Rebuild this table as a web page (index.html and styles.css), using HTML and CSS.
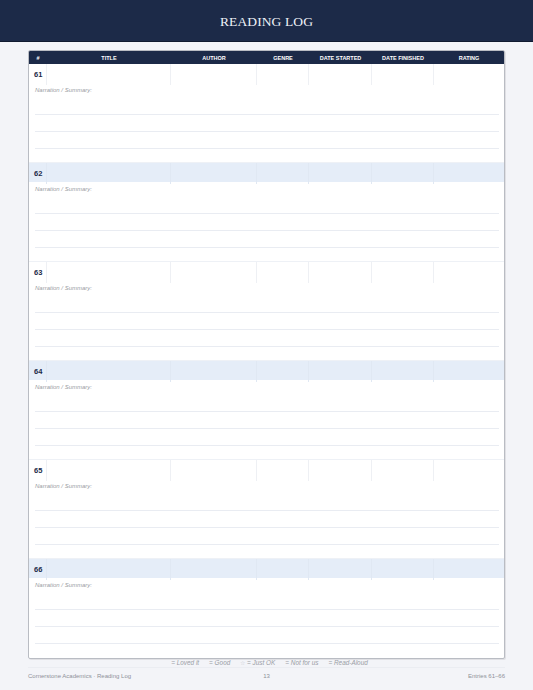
FILE: index.html
```html
<!DOCTYPE html>
<html>
<head>
<meta charset="utf-8">
<link rel="stylesheet" href="styles.css">
</head>
<body>
<header class="top">
  <h1 class="title">READING LOG</h1>
</header>
<main class="page">
  <section class="card">
    <div class="thead">
      <div>#</div><div>TITLE</div><div>AUTHOR</div><div>GENRE</div><div>DATE STARTED</div><div>DATE FINISHED</div><div>RATING</div>
    </div>
    <div class="entry">
      <div class="row"><div class="num">61</div><div></div><div></div><div></div><div></div><div></div><div></div></div>
      <div class="notes"><div class="label">Narration / Summary:</div><div class="line"></div><div class="line"></div><div class="line"></div></div>
    </div>
    <div class="entry alt">
      <div class="row"><div class="num">62</div><div></div><div></div><div></div><div></div><div></div><div></div></div>
      <div class="notes"><div class="label">Narration / Summary:</div><div class="line"></div><div class="line"></div><div class="line"></div></div>
    </div>
    <div class="entry">
      <div class="row"><div class="num">63</div><div></div><div></div><div></div><div></div><div></div><div></div></div>
      <div class="notes"><div class="label">Narration / Summary:</div><div class="line"></div><div class="line"></div><div class="line"></div></div>
    </div>
    <div class="entry alt">
      <div class="row"><div class="num">64</div><div></div><div></div><div></div><div></div><div></div><div></div></div>
      <div class="notes"><div class="label">Narration / Summary:</div><div class="line"></div><div class="line"></div><div class="line"></div></div>
    </div>
    <div class="entry">
      <div class="row"><div class="num">65</div><div></div><div></div><div></div><div></div><div></div><div></div></div>
      <div class="notes"><div class="label">Narration / Summary:</div><div class="line"></div><div class="line"></div><div class="line"></div></div>
    </div>
    <div class="entry alt last">
      <div class="row"><div class="num">66</div><div></div><div></div><div></div><div></div><div></div><div></div></div>
      <div class="notes"><div class="label">Narration / Summary:</div><div class="line"></div><div class="line"></div><div class="line"></div></div>
    </div>
  </section>
  <div class="legend">
    <span>= Loved it</span><span>= Good</span><span><span class="star">☆</span> = Just OK</span><span>= Not for us</span><span>= Read-Aloud</span>
  </div>
  <footer class="foot">
    <span class="fl">Cornerstone Academics · Reading Log</span>
    <span class="fc">13</span>
    <span class="fr">Entries 61–66</span>
  </footer>
</main>
</body>
</html>
```
FILE: styles.css
```css
* { box-sizing: border-box; }
html, body { margin: 0; padding: 0; }
body {
  background: #f3f4f8;
  font-family: "Liberation Sans", Arial, sans-serif;
  width: 533px;
  height: 690px;
  overflow: hidden;
}
.top {
  height: 42px;
  background: #1c2a48;
  border-bottom: 1px solid #101a30;
  display: flex;
  align-items: center;
  justify-content: center;
}
.title {
  margin: 0;
  font-family: "Liberation Serif", "Times New Roman", serif;
  font-weight: normal;
  font-size: 13.5px;
  color: #eef1f7;
  letter-spacing: 0.1px;
  padding-top: 3px;
}
.page {
  padding: 8px 28px 0;
}
.card {
  background: #fff;
  border: 1px solid #b9bcc3;
  border-radius: 2px;
  box-shadow: 1px 1px 0 rgba(0,0,0,0.08);
  overflow: hidden;
}
.thead, .row {
  display: grid;
  grid-template-columns: 18px 124px 86px 52px 63px 62px 1fr;
}
.thead {
  height: 13px;
  background: #1c2a48;
  color: #fff;
  font-size: 5.5px;
  font-weight: bold;
  align-items: center;
  text-align: center;
}
.entry {
  height: 99px;
  border-bottom: 1px solid #eef1f6;
  display: flex;
  flex-direction: column;
}
.entry.last { border-bottom: none; }
.row {
  height: 19px;
}
.row > div {
  border-right: 1px solid #eef0f4;
}
.row > div:last-child { border-right: none; }
.entry.alt .row { background: #e5edf8; }
.entry.alt .row > div { border-right-color: #e0e8f3; }
.num {
  font-size: 7.5px;
  font-weight: bold;
  color: #1c2a48;
  padding-left: 5px;
  padding-top: 1px;
  line-height: 20px;
}
.notes {
  padding: 3px 5px 0 6px;
}
.label {
  font-size: 6px;
  font-style: italic;
  color: #999ca3;
  line-height: 9px;
  margin-bottom: 2px;
}
.line {
  height: 17px;
  border-bottom: 1px solid #e9ecf2;
}
.label + .line { height: 18px; }
.legend {
  display: flex;
  justify-content: center;
  gap: 10px;
  font-size: 6.4px;
  font-style: italic;
  color: #9a9da5;
  padding: 0 0 0 6px;
  height: 8px;
  line-height: 7px;
}
.star { color: #c9ccd3; font-style: normal; }
.foot {
  border-top: 1px solid #ebedf2;
  display: grid;
  grid-template-columns: 1fr auto 1fr;
  font-size: 6px;
  color: #8e9199;
  padding-top: 5px;
}
.fr { text-align: right; }
```
